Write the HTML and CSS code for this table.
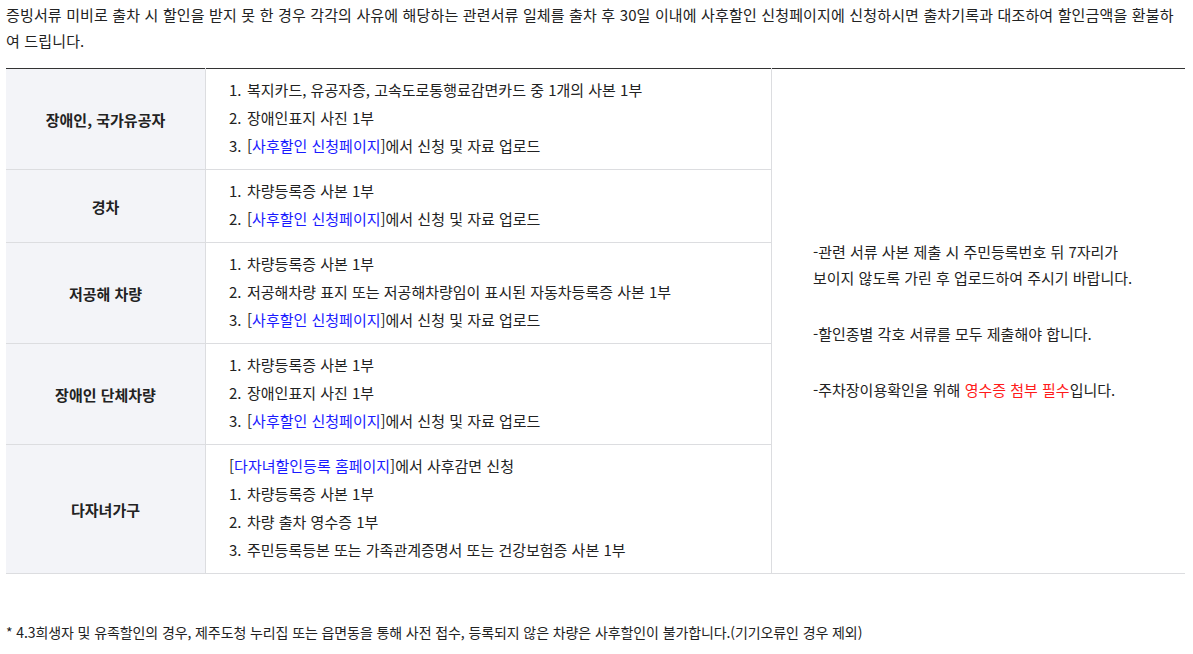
FILE: index.html
```html
<!DOCTYPE html>
<html lang="ko">
<head>
<meta charset="utf-8">
<link rel="stylesheet" href="styles.css">
</head>
<body>
<div class="page">
  <p class="intro">증빙서류 미비로 출차 시 할인을 받지 못 한 경우 각각의 사유에 해당하는 관련서류 일체를 출차 후 30일 이내에 사후할인 신청페이지에 신청하시면 출차기록과 대조하여 할인금액을 환불하여 드립니다.</p>
  <table class="docs">
    <tr>
      <th>장애인, 국가유공자</th>
      <td class="items">
        <div class="li"><span class="n">1.</span>복지카드, 유공자증, 고속도로통행료감면카드 중 1개의 사본 1부</div>
        <div class="li"><span class="n">2.</span>장애인표지 사진 1부</div>
        <div class="li"><span class="n">3.</span>[<a class="link">사후할인 신청페이지</a>]에서 신청 및 자료 업로드</div>
      </td>
      <td class="notes" rowspan="5">
        <p>-관련 서류 사본 제출 시 주민등록번호 뒤 7자리가<br>보이지 않도록 가린 후 업로드하여 주시기 바랍니다.</p>
        <p>-할인종별 각호 서류를 모두 제출해야 합니다.</p>
        <p>-주차장이용확인을 위해 <span class="red">영수증 첨부 필수</span>입니다.</p>
      </td>
    </tr>
    <tr>
      <th>경차</th>
      <td class="items">
        <div class="li"><span class="n">1.</span>차량등록증 사본 1부</div>
        <div class="li"><span class="n">2.</span>[<a class="link">사후할인 신청페이지</a>]에서 신청 및 자료 업로드</div>
      </td>
    </tr>
    <tr>
      <th>저공해 차량</th>
      <td class="items">
        <div class="li"><span class="n">1.</span>차량등록증 사본 1부</div>
        <div class="li"><span class="n">2.</span>저공해차량 표지 또는 저공해차량임이 표시된 자동차등록증 사본 1부</div>
        <div class="li"><span class="n">3.</span>[<a class="link">사후할인 신청페이지</a>]에서 신청 및 자료 업로드</div>
      </td>
    </tr>
    <tr>
      <th>장애인 단체차량</th>
      <td class="items">
        <div class="li"><span class="n">1.</span>차량등록증 사본 1부</div>
        <div class="li"><span class="n">2.</span>장애인표지 사진 1부</div>
        <div class="li"><span class="n">3.</span>[<a class="link">사후할인 신청페이지</a>]에서 신청 및 자료 업로드</div>
      </td>
    </tr>
    <tr>
      <th>다자녀가구</th>
      <td class="items">
        <div class="li">[<a class="link">다자녀할인등록 홈페이지</a>]에서 사후감면 신청</div>
        <div class="li"><span class="n">1.</span>차량등록증 사본 1부</div>
        <div class="li"><span class="n">2.</span>차량 출차 영수증 1부</div>
        <div class="li"><span class="n">3.</span>주민등록등본 또는 가족관계증명서 또는 건강보험증 사본 1부</div>
      </td>
    </tr>
  </table>
  <p class="foot">* 4.3희생자 및 유족할인의 경우, 제주도청 누리집 또는 읍면동을 통해 사전 접수, 등록되지 않은 차량은 사후할인이 불가합니다.(기기오류인 경우 제외)</p>
</div>
</body>
</html>
```

FILE: styles.css
```css
html, body {
  margin: 0;
  padding: 0;
  background: #fff;
}
body {
  font-family: "Noto Sans CJK KR", "Noto Sans", sans-serif;
  font-size: 15px;
  color: #222;
}
.page {
  padding: 2px 8px 0 6px;
}
.intro {
  margin: 0;
  line-height: 26px;
  word-break: break-all;
  letter-spacing: 0.15px;
}
.docs {
  width: 100%;
  margin-top: 14px;
  border-collapse: collapse;
  border-top: 1px solid #333;
}
.docs th {
  width: 199px;
  background: #f3f4f8;
  font-weight: 700;
  text-align: center;
  border-bottom: 1px solid #dcdde0;
  border-right: 1px solid #dcdde0;
  padding: 0;
}
.docs td {
  border-bottom: 1px solid #dcdde0;
  border-right: 1px solid #dcdde0;
  vertical-align: middle;
}
.items {
  width: 522px;
  padding: 7px 20px 9px 23px;
}
.li {
  line-height: 28px;
  white-space: nowrap;
}
.n {
  display: inline-block;
  width: 18px;
}
.link {
  color: #1a1aff;
}
.docs td.notes {
  border-right: none;
  padding: 0 20px 0 41px;
}
.notes p {
  margin: 0 0 30px;
  line-height: 26px;
}
.notes p:last-child {
  margin-bottom: 0;
}
.red {
  color: #ff1a1a;
}
.foot {
  margin: 48px 0 0;
  font-size: 14px;
  line-height: 20px;
  letter-spacing: -0.1px;
}
```
